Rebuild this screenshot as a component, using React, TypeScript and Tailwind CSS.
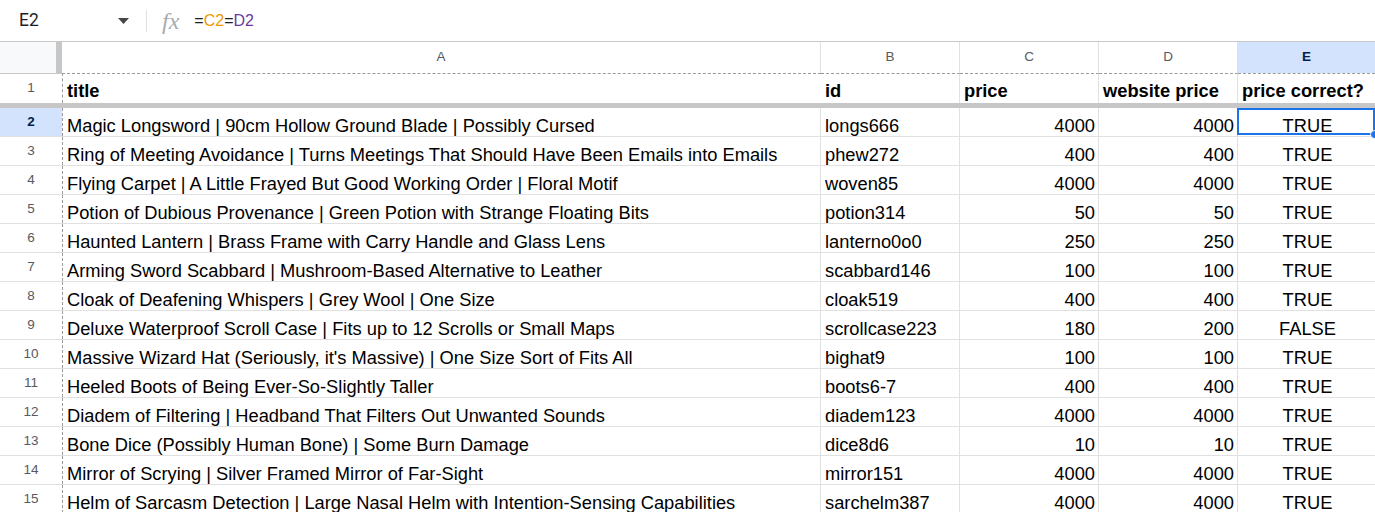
import React from "react";

type Row = {
  title: string;
  id: string;
  price: number;
  website: number;
};

const rows: Row[] = [
  { title: "Magic Longsword | 90cm Hollow Ground Blade | Possibly Cursed", id: "longs666", price: 4000, website: 4000 },
  { title: "Ring of Meeting Avoidance | Turns Meetings That Should Have Been Emails into Emails", id: "phew272", price: 400, website: 400 },
  { title: "Flying Carpet | A Little Frayed But Good Working Order | Floral Motif", id: "woven85", price: 4000, website: 4000 },
  { title: "Potion of Dubious Provenance | Green Potion with Strange Floating Bits", id: "potion314", price: 50, website: 50 },
  { title: "Haunted Lantern | Brass Frame with Carry Handle and Glass Lens", id: "lanterno0o0", price: 250, website: 250 },
  { title: "Arming Sword Scabbard | Mushroom-Based Alternative to Leather", id: "scabbard146", price: 100, website: 100 },
  { title: "Cloak of Deafening Whispers | Grey Wool | One Size", id: "cloak519", price: 400, website: 400 },
  { title: "Deluxe Waterproof Scroll Case | Fits up to 12 Scrolls or Small Maps", id: "scrollcase223", price: 180, website: 200 },
  { title: "Massive Wizard Hat (Seriously, it's Massive) | One Size Sort of Fits All", id: "bighat9", price: 100, website: 100 },
  { title: "Heeled Boots of Being Ever-So-Slightly Taller", id: "boots6-7", price: 400, website: 400 },
  { title: "Diadem of Filtering | Headband That Filters Out Unwanted Sounds", id: "diadem123", price: 4000, website: 4000 },
  { title: "Bone Dice (Possibly Human Bone) | Some Burn Damage", id: "dice8d6", price: 10, website: 10 },
  { title: "Mirror of Scrying | Silver Framed Mirror of Far-Sight", id: "mirror151", price: 4000, website: 4000 },
  { title: "Helm of Sarcasm Detection | Large Nasal Helm with Intention-Sensing Capabilities", id: "sarchelm387", price: 4000, website: 4000 },
];

const cellFont = { fontFamily: '"Liberation Sans", Arial, sans-serif' };

function FormulaBar() {
  return (
    <div className="flex items-center h-[42px] border-b border-[#c7c7c7] bg-white" style={{ fontFamily: 'Roboto, "Liberation Sans", sans-serif' }}>
      <div className="w-[146px] flex items-center pl-[19px] pr-[17px] justify-between">
        <span className="text-[17.5px] text-[#1f1f1f]">E2</span>
        <svg width="11" height="6" viewBox="0 0 11 6">
          <path d="M0 0h11L5.5 6z" fill="#444746" />
        </svg>
      </div>
      <div className="w-px h-[22px] bg-[#e1e1e1]" />
      <span className="ml-[15px] text-[24px] italic text-[#a8abae] leading-none" style={{ fontFamily: '"Liberation Serif", serif' }}>
        fx
      </span>
      <span className="ml-[15px] text-[16px] text-[#1f1f1f]" style={cellFont}>
        =<span className="text-[#f29900]">C2</span>=<span className="text-[#6a3a9f]">D2</span>
      </span>
    </div>
  );
}

function ColumnHeaders() {
  const cols = [
    { l: "A", w: "w-[759px]" },
    { l: "B", w: "w-[139px]" },
    { l: "C", w: "w-[139px]" },
    { l: "D", w: "w-[139px]" },
  ];
  return (
    <div className="flex h-[31px] text-[13.5px]" style={cellFont}>
      <div className="flex w-[62px] shrink-0">
        <div className="w-[56px] bg-[#f8f9fa]" />
        <div className="w-[6px] bg-[#c7c7c7]" />
      </div>
      {cols.map((c) => (
        <div key={c.l} className={`${c.w} shrink-0 flex items-center justify-center border-r border-[#e1e1e1] text-[#575a5e]`}>
          {c.l}
        </div>
      ))}
      <div className="flex-1 flex items-center justify-center bg-[#d3e3fd] font-bold text-[#041e49]">E</div>
    </div>
  );
}

function HeaderRow() {
  const cell = "shrink-0 flex items-end pb-[2px] pl-[4px] leading-[21px] border-t border-dashed border-[#9a9a9a]";
  return (
    <div className="flex h-[30px] text-[18.3px] font-bold text-black whitespace-nowrap" style={cellFont}>
      <div className="w-[62px] shrink-0 flex items-center justify-center border-t border-[#c7c7c7] text-[13.5px] font-normal text-[#575a5e]">1</div>
      <div className={`w-[759px] ${cell} border-l`}>title</div>
      <div className={`w-[139px] ${cell} border-r-[#e1e1e1] border-r border-l-0`} style={{ borderRightStyle: "solid" }}>id</div>
      <div className={`w-[139px] ${cell} border-r-[#e1e1e1] border-r`} style={{ borderRightStyle: "solid" }}>price</div>
      <div className={`w-[139px] ${cell} border-r-[#e1e1e1] border-r`} style={{ borderRightStyle: "solid" }}>website price</div>
      <div className={`flex-1 ${cell}`}>price correct?</div>
    </div>
  );
}

function DataRow({ n, r }: { n: number; r: Row }) {
  const selected = n === 2;
  const ok = r.price === r.website;
  const cell = "shrink-0 flex items-end pb-0 leading-[20px] border-r border-[#e1e1e1] overflow-hidden";
  return (
    <div className="flex h-[29px] border-b border-[#e1e1e1] text-[18.3px] text-black whitespace-nowrap" style={cellFont}>
      <div
        className={`w-[62px] shrink-0 flex items-center justify-center text-[13.5px] ${
          selected ? "bg-[#d3e3fd] font-bold text-[#041e49]" : "text-[#575a5e]"
        }`}
      >
        {n}
      </div>
      <div className={`w-[759px] ${cell} pl-[4px] border-l border-l-[#9a9a9a]`} style={{ borderLeftStyle: "dashed" }}>
        {r.title}
      </div>
      <div className={`w-[139px] ${cell} pl-[4px]`}>{r.id}</div>
      <div className={`w-[139px] ${cell} justify-end pr-[3px]`}>{r.price}</div>
      <div className={`w-[139px] ${cell} justify-end pr-[3px]`}>{r.website}</div>
      <div className="relative flex-1 flex items-end justify-center pb-0 pl-[2px] leading-[20px]">
        {ok ? "TRUE" : "FALSE"}
        {selected && (
          <>
            <div className="absolute left-[-1px] top-0 right-0 bottom-[1px] border-2 border-[#1a73e8] pointer-events-none" />
            <div className="absolute right-[-4px] bottom-[-3px] w-[9px] h-[9px] rounded-full bg-[#1a73e8] border border-white" />
          </>
        )}
      </div>
    </div>
  );
}

export default function App() {
  return (
    <div className="w-full h-[512px] overflow-hidden bg-white">
      <FormulaBar />
      <ColumnHeaders />
      <HeaderRow />
      <div className="h-[5px] bg-[#c7c7c7]" />
      {rows.map((r, i) => (
        <DataRow key={r.id} n={i + 2} r={r} />
      ))}
    </div>
  );
}
